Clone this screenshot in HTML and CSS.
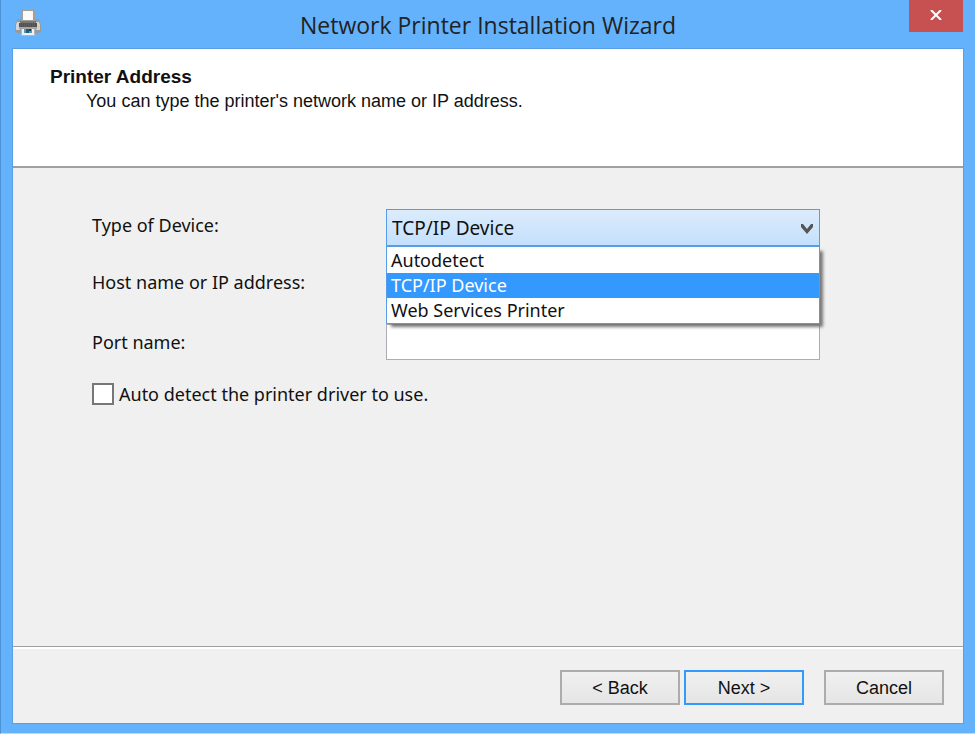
FILE: index.html
```html
<!DOCTYPE html>
<html lang="en">
<head>
<meta charset="utf-8">
<title>Network Printer Installation Wizard</title>
<link rel="stylesheet" href="styles.css">
</head>
<body>
<div class="window">
  <header class="titlebar">
    <svg class="app-icon" viewBox="0 0 28 28" aria-hidden="true">
      <path d="M4 10h20l3 5v7l-2 2H3l-2-2v-7z" fill="#96999d"/>
      <path d="M3 13h3v8H2v-5zM22 13h3l1 3v5h-4z" fill="#d4d5d6"/>
      <path d="M7 1h14v12H7z" fill="#a59e97"/>
      <path d="M9 2h10v9H9z" fill="#fafafa"/>
      <path d="M6 12h16v2H6z" fill="#777"/>
      <path d="M5 14h18v4H5z" fill="#505050"/>
      <path d="M6 15h16M6 17h16" stroke="#6d6d6d" stroke-dasharray="1 1"/>
      <path d="M5 18h18v2H5z" fill="#a6a6a6"/>
      <path d="M24 17h1v3h-1z" fill="#c2d6ad"/>
      <path d="M7 20h14v7H7z" fill="#b9b5af"/>
      <path d="M8 20h12v6H8z" fill="#eef3f5"/>
      <path d="M10 20h8v4h-8z" fill="#4c9dbb"/>
      <path d="M12 20h3v4h-3z" fill="#245a78"/>
      <path d="M15 20h2v2h-2z" fill="#153e55"/>
    </svg>
    <h1 class="title">Network Printer Installation Wizard</h1>
    <button class="close" type="button" aria-label="Close">
      <svg viewBox="0 0 12 10" aria-hidden="true"><path d="M1 0l10 10M11 0L1 10"/></svg>
    </button>
  </header>
  <form class="panel">
    <div class="intro">
      <h2>Printer Address</h2>
      <p>You can type the printer's network name or IP address.</p>
    </div>
    <main class="content">
      <div class="fields">
        <label for="device">Type of Device:</label>
        <div class="combo">
          <select id="device">
            <option>Autodetect</option>
            <option selected>TCP/IP Device</option>
            <option>Web Services Printer</option>
          </select>
          <svg class="chevron" viewBox="0 0 12 10" aria-hidden="true"><path d="M0 0h2l4 5 4-5h2v3l-6 7-6-7z"/></svg>
          <ul class="options" role="listbox" aria-labelledby="device">
            <li role="option">Autodetect</li>
            <li role="option" class="selected" aria-selected="true">TCP/IP Device</li>
            <li role="option">Web Services Printer</li>
          </ul>
        </div>
        <label for="host">Host name or IP address:</label>
        <input id="host" type="text">
        <label for="port">Port name:</label>
        <input id="port" type="text">
      </div>
      <div class="check">
        <input id="auto" type="checkbox">
        <label for="auto">Auto detect the printer driver to use.</label>
      </div>
    </main>
    <footer class="actions">
      <button type="button">&lt; Back</button>
      <button type="button" class="primary">Next &gt;</button>
      <button type="button" class="cancel">Cancel</button>
    </footer>
  </form>
</div>
</body>
</html>
```
FILE: styles.css
```css
* {
  box-sizing: border-box;
}

body {
  margin: 0;
  color: #111;
  font-family: "Noto Sans", "Open Sans", sans-serif;
  font-size: 18px;
  line-height: 24px;
}

h1, h2, p, ul {
  margin: 0;
  padding: 0;
}

button, input, select {
  margin: 0;
  font: inherit;
  color: inherit;
  border-radius: 0;
}

.window {
  display: flex;
  flex-direction: column;
  min-height: 100vh;
  padding: 0 12px 10px;
  background: #64b2fc;
  border-left: 1px solid #4e93d3;
  border-bottom: 1px solid #b5dafd;
}

.titlebar {
  display: grid;
  grid-template-columns: 54px 1fr 54px;
  height: 49px;
}

.app-icon {
  width: 28px;
  height: 28px;
  margin: 9px 0 0 1px;
}

.title {
  align-self: center;
  font-family: "Open Sans", "Noto Sans", sans-serif;
  font-size: 23px;
  font-weight: 400;
  text-align: center;
  color: #222;
}

.close {
  height: 32px;
  padding: 0;
  border: 0;
  background: #c75050;
}

.close svg {
  display: block;
  width: 12px;
  height: 10px;
  margin: 0 auto 2px;
  fill: none;
  stroke: #fff;
  stroke-width: 2;
}

.panel {
  flex: 1;
  display: flex;
  flex-direction: column;
  background: #f0f0f0;
  outline: 1px solid #589fe3;
}

.intro {
  height: 119px;
  padding: 16px 37px;
  background: #fff;
  border-bottom: 2px solid #a0a0a0;
  font-family: "Liberation Sans", sans-serif;
}

.intro h2 {
  font-size: 19px;
  line-height: 24px;
}

.intro p {
  padding-left: 36px;
}

.content {
  flex: 1;
  padding: 41px 79px;
}

.fields {
  display: grid;
  grid-template-columns: 294px minmax(0, 434px);
  grid-template-rows: 31px 36px 36px;
  row-gap: 24px;
  align-items: center;
}

.fields input {
  width: 100%;
  height: 36px;
  padding: 0 5px;
  background: #fff;
  border: 1px solid #abadb3;
}

.combo {
  position: relative;
  align-self: start;
}

.combo select {
  display: block;
  width: 100%;
  height: 38px;
  padding: 0 5px;
  appearance: none;
  background: linear-gradient(#dcecfc, #c4e0fc);
  border: 1px solid #569de5;
  border-bottom-width: 2px;
  font-size: 19px;
}

.chevron {
  position: absolute;
  top: 15px;
  right: 7px;
  width: 12px;
  height: 10px;
  fill: #555;
}

.options {
  position: absolute;
  top: 37px;
  left: 0;
  right: 0;
  padding: 1px 0 0;
  list-style: none;
  background: #fff;
  border: 1px solid #569de5;
  box-shadow: 4px 4px 3px -1px #777;
}

.options li {
  height: 25px;
  padding-left: 4px;
}

.options .selected {
  background: #3399ff;
  color: #fff;
}

.check {
  display: flex;
  align-items: center;
  gap: 5px;
  margin-top: 22px;
}

.check input {
  appearance: none;
  width: 22px;
  height: 22px;
  background: #fff;
  border: 2px solid #777;
}

.actions {
  display: flex;
  justify-content: flex-end;
  gap: 4px;
  height: 77px;
  padding: 23px 19px 0;
  border-top: 1px solid #a0a0a0;
  box-shadow: inset 0 2px #fff;
  font-family: "Liberation Sans", sans-serif;
}

.actions button {
  width: 120px;
  height: 35px;
  padding: 0;
  background: linear-gradient(#f0f0f0, #e5e5e5);
  border: 2px solid #acacac;
}

.actions .primary {
  border-color: #3399ff;
}

.actions .cancel {
  margin-left: 16px;
}
```
